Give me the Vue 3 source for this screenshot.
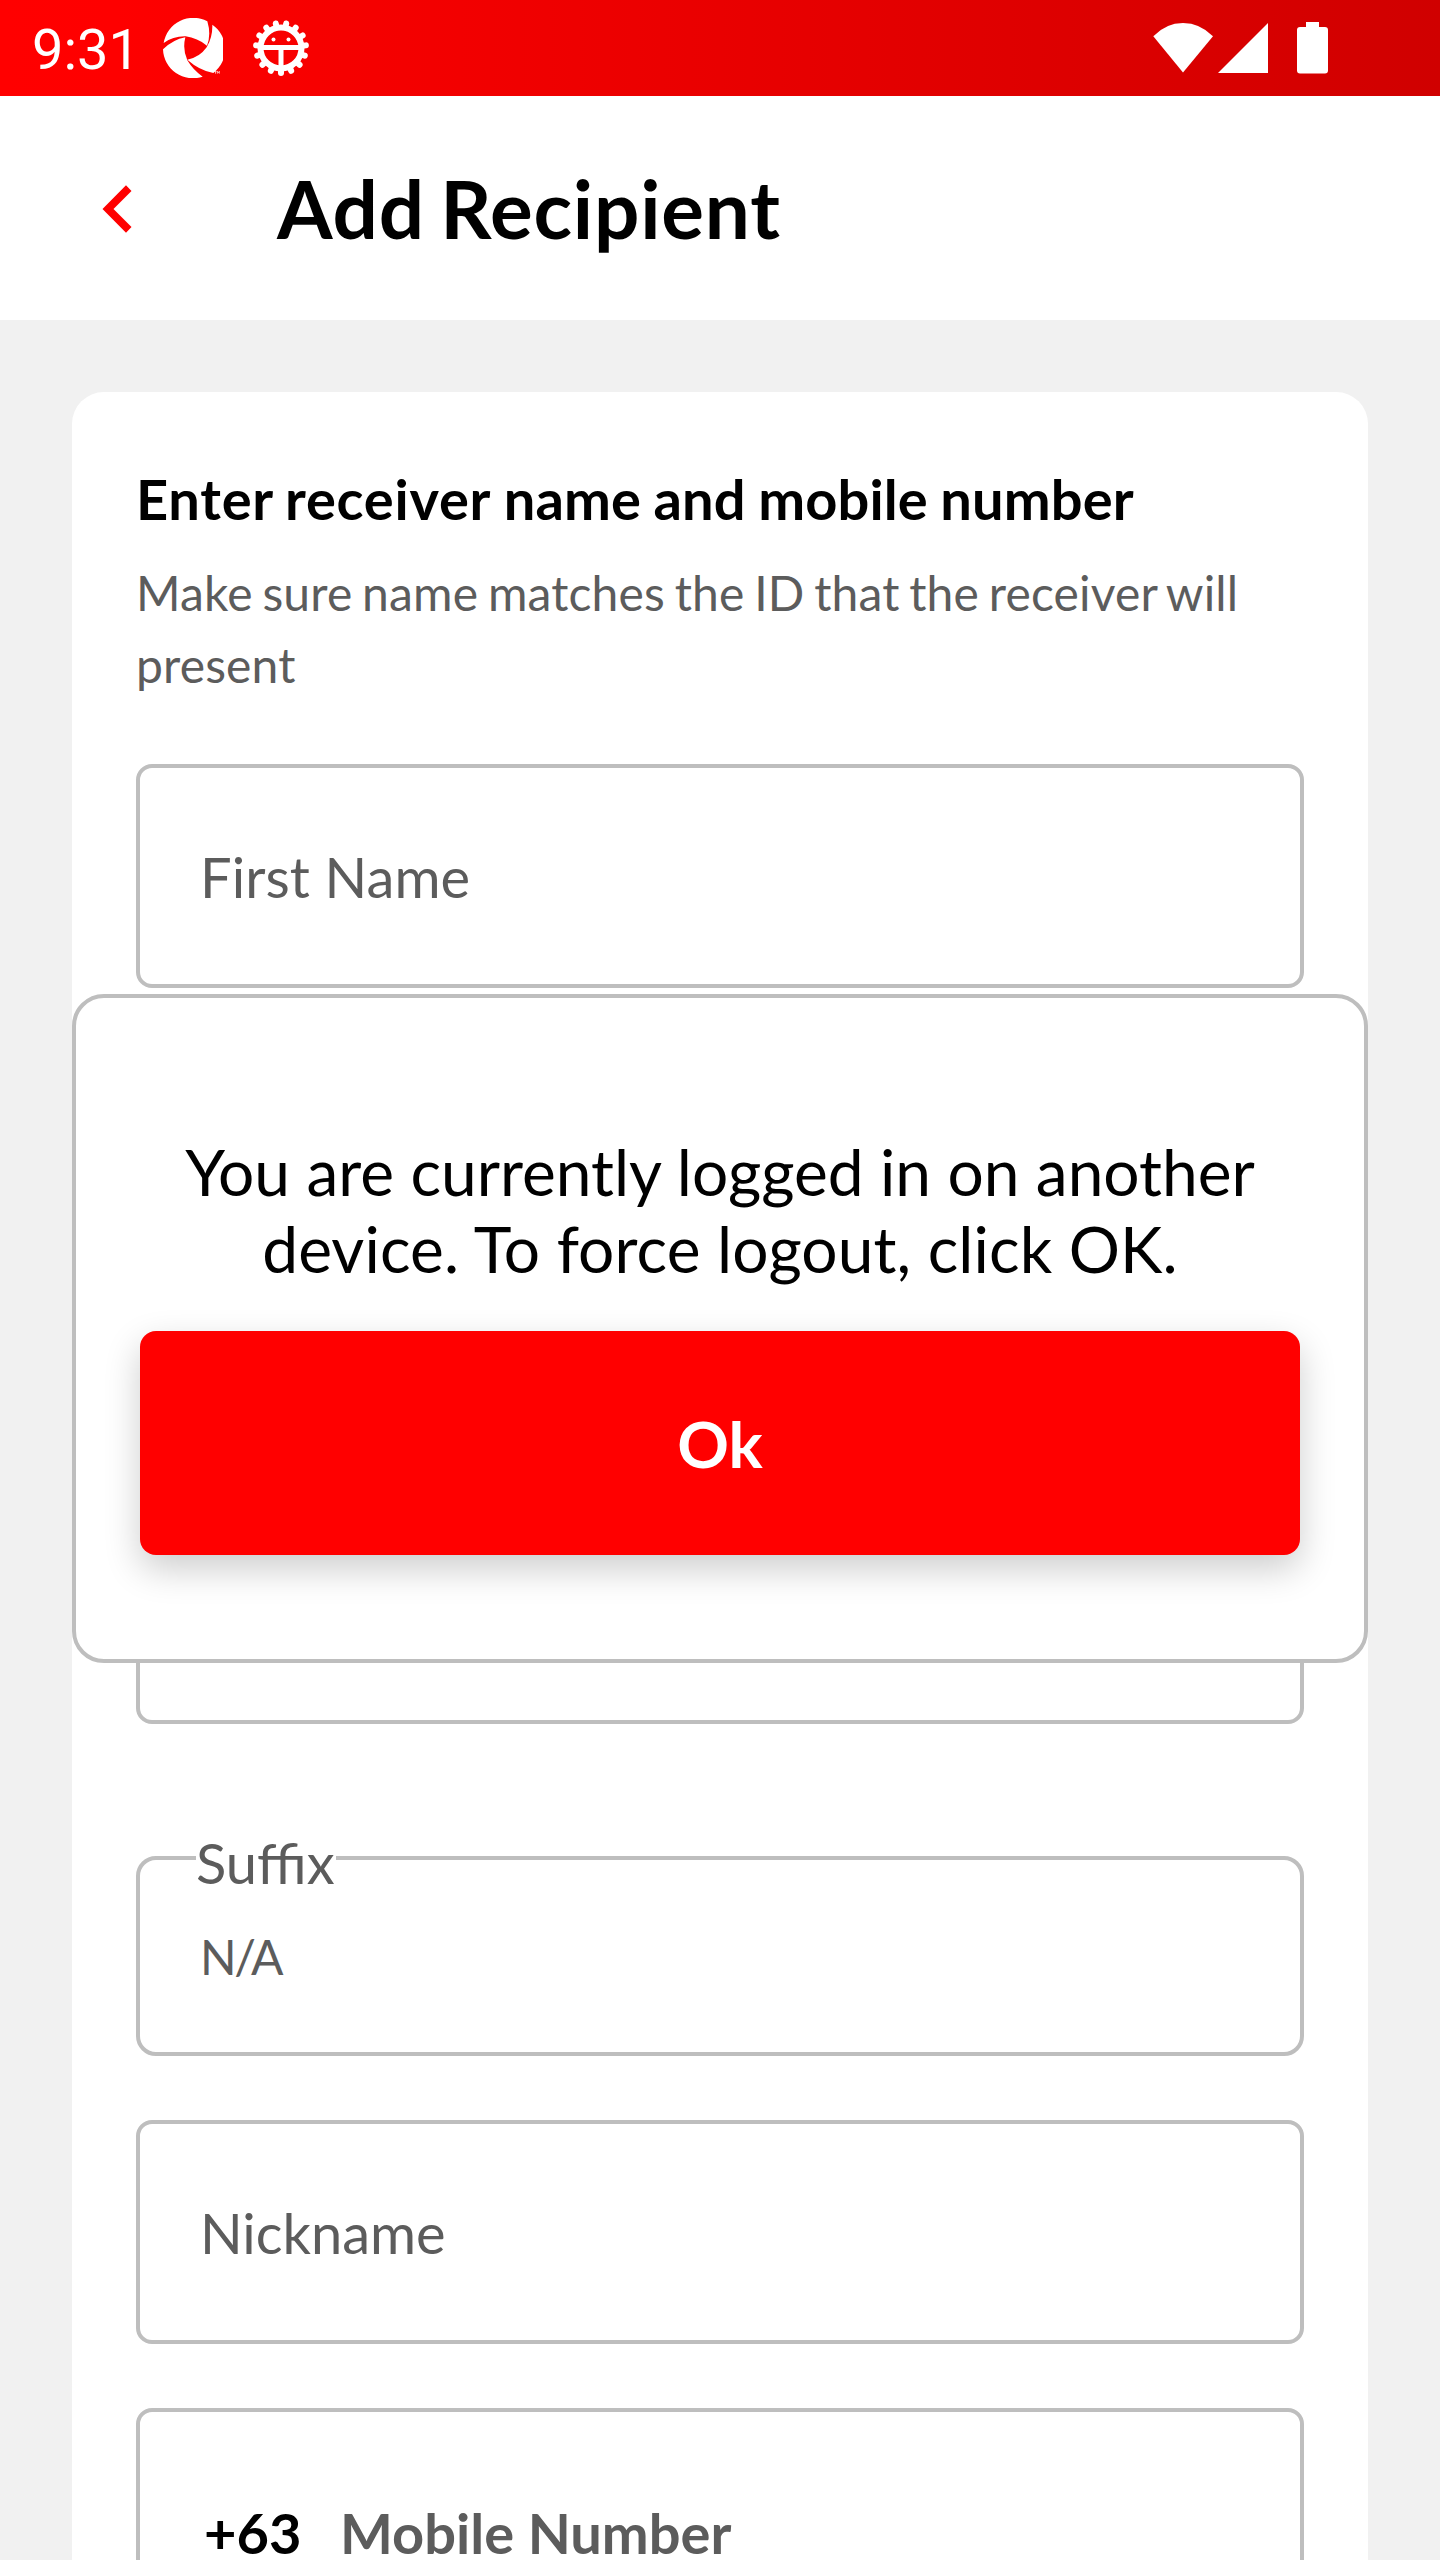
<script setup>
const teeth = Array.from({ length: 15 }, (_, i) => i * 24)
</script>

<template>
  <div class="screen">
    <header class="status">
      <span class="clock">9:31</span>
      <svg class="aperture" viewBox="489 54 180 180" fill="#fff">
        <path d="M491 129Q520 108 557 109Q592 114 621 137Q634 104 622 64A90 90 0 0 0 491 129Z" />
        <path d="M637 74A90 90 0 0 1 640 219Q598 211 562 179Q598 173 620 142Q638 112 637 74Z" />
        <path d="M489 148Q519 119 556 112Q547 148 562 181Q580 211 608 230A90 90 0 0 1 489 148Z" />
        <path d="M643 214h7M646.500 214v7M652 221v-7l3 4 3-4v7" fill="none" stroke="#fff" stroke-width="2" />
      </svg>
      <svg class="gear" viewBox="-28 -28 56 56">
        <circle r="20.500" fill="none" stroke="#fff" stroke-width="6" />
        <line v-for="a in teeth" :key="a" y1="21" y2="25" stroke="#fff" stroke-width="6" stroke-linecap="round" :transform="`rotate(${a})`" />
        <path d="M-18 -0.500H18M0 -0.500V20" fill="none" stroke="#fff" stroke-width="5" />
        <circle cx="-7.500" cy="-8.500" r="2" fill="#fff" />
        <circle cx="7.500" cy="-8.500" r="2" fill="#fff" />
      </svg>
      <svg class="signals" viewBox="0 0 176 52" fill="#fff">
        <path d="M0.300 14.300Q13 1 30 1Q47 1 60 14.300L30 50.500Z" />
        <path d="M65 51H115V1Z" />
        <path d="M153 0h13v5h6q3 0 3 3v40.500q0 3-3 3h-25q-3 0-3-3V8q0-3 3-3h6z" />
      </svg>
    </header>

    <nav class="bar">
      <svg class="back" viewBox="0 0 30 48"><path d="M24 0.300L29.500 6L11.500 24L29.500 42L24 47.700L0.500 24Z" fill="#f00" /></svg>
      <h1>Add Recipient</h1>
    </nav>

    <main class="card">
      <h2><span class="loose">Enter receiver</span> name and mobile number</h2>
      <p class="hint">Make sure name matches the ID that the receiver will present</p>
      <div class="field first"><span>First Name</span></div>
      <div class="field middle"></div>
      <div class="field last"></div>
      <div class="field suffix">
        <label>Suffix</label>
        <span class="value">N/A</span>
      </div>
      <div class="field nick"><span>Nickname</span></div>
      <div class="field mobile"><b class="code">+63</b><b class="number">Mobile Number</b></div>
    </main>

    <section class="dialog">
      <p>You are currently logged in on another<br /><span class="second">device. To force logout, click OK.</span></p>
      <button>Ok</button>
    </section>
  </div>
</template>

<style>
body { margin: 0; overflow: hidden; }
</style>

<style scoped>
* { box-sizing: border-box; }
.screen {
  position: relative;
  width: 1440px;
  height: 2560px;
  overflow: hidden;
  background: #f1f1f1;
  font-family: Lato, sans-serif;
  color: #000;
}
.status {
  display: flex;
  align-items: flex-start;
  height: 96px;
  background: linear-gradient(90deg, #f00 0%, #fe0000 8%, #d00000 100%);
}
.clock {
  width: 131px;
  margin: 17px 0 0 32px;
  font: 400 56px/66px Roboto, sans-serif;
  color: #fff;
}
.aperture { width: 60px; height: 60px; margin-top: 18px; }
.gear { width: 56px; height: 56px; margin: 20px 0 0 30px; }
.signals { width: 176px; height: 52px; margin: 22px 0 0 844px; }
.bar {
  display: flex;
  align-items: flex-start;
  height: 224px;
  background: #fff;
}
.back { width: 30px; height: 48px; margin: 89px 0 0 102px; }
h1 {
  margin: 64px 0 0 145px;
  font-size: 80px;
  line-height: 96px;
  font-weight: 700;
  letter-spacing: 0.8px;
  word-spacing: -4.8px;
}
.card {
  display: flex;
  flex-direction: column;
  height: 2400px;
  margin: 72px 72px 0;
  padding: 71px 64px 0;
  border-radius: 32px;
  background: #fff;
}
h2 {
  margin: 0;
  font-size: 56px;
  line-height: 72px;
  font-weight: 700;
  letter-spacing: 0.12px;
  word-spacing: -1.2px;
  white-space: nowrap;
}
.loose { letter-spacing: 0.75px; word-spacing: -2px; }
.hint {
  margin: 22px 0 0;
  height: 144px;
  font-size: 48px;
  line-height: 72px;
  letter-spacing: 0.15px;
  word-spacing: -2.7px;
  color: #5c5c5c;
}
.field {
  position: relative;
  display: flex;
  flex: none;
  height: 224px;
  padding: 0 60px;
  border: 4px solid #bebebe;
  border-radius: 16px;
  font-size: 56px;
  line-height: 68px;
  color: #5c5c5c;
}
.field span, .field b { margin-top: 75px; white-space: nowrap; }
.first { margin-top: 63px; }
.first span { letter-spacing: 0.1px; }
.middle { margin-top: 64px; }
.last { margin-top: 224px; }
.suffix { height: 200px; margin-top: 132px; border-radius: 20px; }
.suffix label {
  position: absolute;
  left: 56px;
  top: -31px;
  width: 140px;
  background: #fff;
  white-space: nowrap;
}
.field .value { margin-top: 63px; font-size: 48px; letter-spacing: -2.3px; }
.nick { margin-top: 64px; }
.mobile { margin-top: 64px; }
.field.mobile b { margin-top: 87px; }
.code { width: 140px; padding-left: 4px; color: #000; }
.dialog {
  position: absolute;
  left: 72px;
  top: 994px;
  width: 1296px;
  height: 669px;
  display: flex;
  flex-direction: column;
  padding: 135px 64px 0;
  border: 4px solid #bebebe;
  border-radius: 32px;
  background: #fff;
}
.dialog p {
  margin: 0;
  height: 198px;
  font-size: 64px;
  line-height: 77px;
  text-align: center;
  white-space: nowrap;
}
.second { letter-spacing: 0.1px; }
button {
  display: block;
  height: 224px;
  padding: 1px 0 0;
  border: 0;
  border-radius: 16px;
  background: #f00;
  box-shadow: 0 14px 36px rgba(0, 0, 0, 0.2);
  font: 700 64px/223px Lato, sans-serif;
  color: #fff;
}
</style>
